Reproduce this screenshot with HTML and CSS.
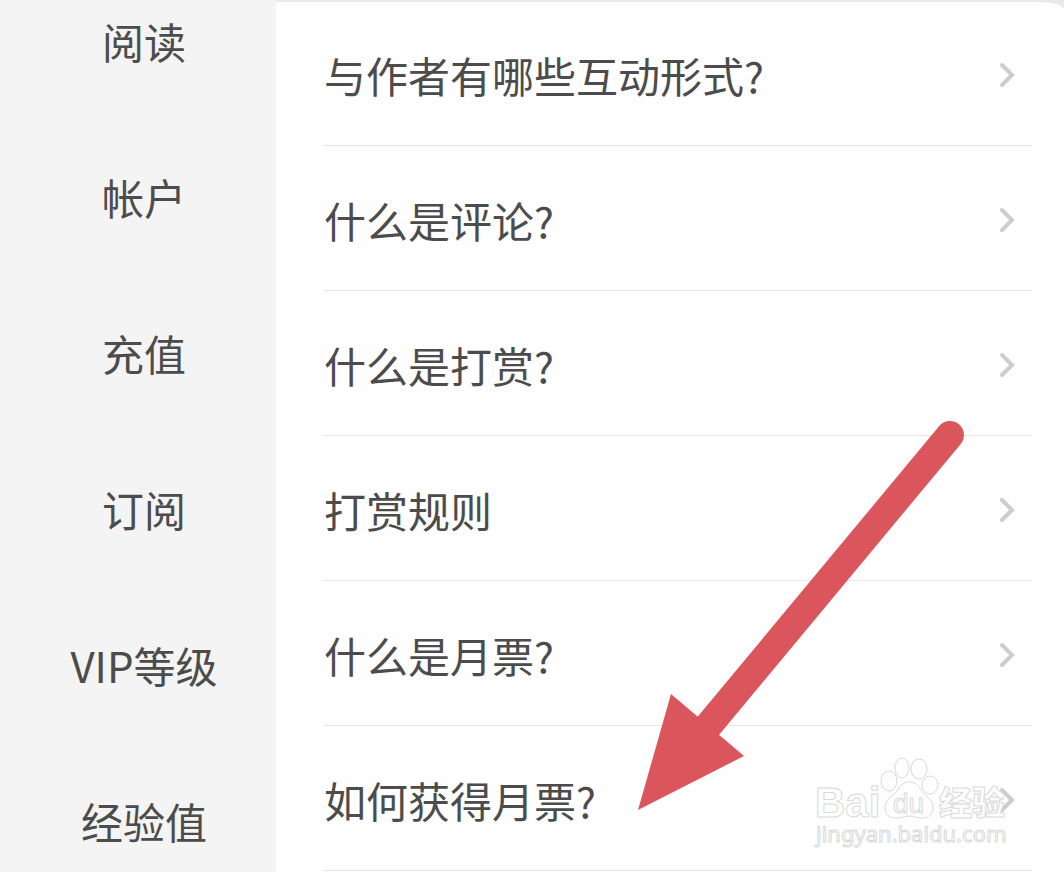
FILE: index.html
```html
<!DOCTYPE html>
<html lang="zh-CN">
<head>
<meta charset="utf-8">
<meta name="viewport" content="width=device-width, initial-scale=1">
<title>帮助中心</title>
<link rel="stylesheet" href="styles.css">
</head>
<body>
<div class="page">
  <nav class="sidebar">
    <a class="category" href="#read">阅读</a>
    <a class="category" href="#account">帐户</a>
    <a class="category" href="#topup">充值</a>
    <a class="category" href="#subscribe">订阅</a>
    <a class="category" href="#vip">VIP等级</a>
    <a class="category" href="#exp">经验值</a>
  </nav>
  <main class="panel">
    <a class="question" href="#q1"><span>与作者有哪些互动形式?</span><svg class="chevron" viewBox="0 0 20 28"><path d="M4 4 14 14 4 24"/></svg></a>
    <a class="question" href="#q2"><span>什么是评论?</span><svg class="chevron" viewBox="0 0 20 28"><path d="M4 4 14 14 4 24"/></svg></a>
    <a class="question" href="#q3"><span>什么是打赏?</span><svg class="chevron" viewBox="0 0 20 28"><path d="M4 4 14 14 4 24"/></svg></a>
    <a class="question" href="#q4"><span>打赏规则</span><svg class="chevron" viewBox="0 0 20 28"><path d="M4 4 14 14 4 24"/></svg></a>
    <a class="question" href="#q5"><span>什么是月票?</span><svg class="chevron" viewBox="0 0 20 28"><path d="M4 4 14 14 4 24"/></svg></a>
    <a class="question" href="#q6"><span>如何获得月票?</span><svg class="chevron" viewBox="0 0 20 28"><path d="M4 4 14 14 4 24"/></svg></a>
  </main>
  <svg class="arrow" viewBox="0 0 330 392" aria-hidden="true">
    <path class="arrow-shaft" d="M312 15 71 305"/>
    <path class="arrow-head" d="M0 390 33 274 106 336Z"/>
  </svg>
  <svg class="watermark" viewBox="0 0 210 100" aria-hidden="true">
    <text class="mark-brand" x="3" y="67">Bai</text>
    <ellipse cx="77" cy="31" rx="8" ry="10"/>
    <ellipse cx="90" cy="18" rx="7" ry="10"/>
    <ellipse cx="107" cy="19" rx="8" ry="10"/>
    <ellipse cx="118" cy="35" rx="8" ry="9"/>
    <path d="M97 32C91 32 88 36 85 41 81 46 73 49 73 58 73 65 78 68 85 68 91 68 93 66 97 66 102 66 104 68 110 68 117 68 121 64 121 57 121 49 113 46 109 40 106 35 103 32 97 32Z"/>
    <text class="mark-du" x="81" y="63">du</text>
    <text class="mark-cn" x="127" y="65">经验</text>
    <text class="mark-url" x="4" y="92">jingyan.baidu.com</text>
  </svg>
</div>
</body>
</html>
```
FILE: styles.css
```css
* {
  box-sizing: border-box;
}

body {
  margin: 0;
  background: #f4f4f4;
  color: #4c4c4c;
  font-family: "Noto Sans CJK SC", sans-serif;
  font-size: 42px;
  line-height: 60px;
}

a {
  color: inherit;
  text-decoration: none;
}

.page {
  position: relative;
  display: grid;
  grid-template-columns: 276px 1fr;
  min-height: 100vh;
  overflow: hidden;
  background: #e8e8e8;
}

.sidebar {
  display: flex;
  flex-direction: column;
  gap: 96px;
  padding: 11px 0 0 12px;
  background: #f4f4f4;
  text-align: center;
}

.panel {
  margin-top: 2px;
  padding: 0 32px 0 48px;
  background: #fefefe;
  border-top-right-radius: 24px 8px;
}

.question {
  display: flex;
  align-items: center;
  justify-content: space-between;
  height: 145px;
  padding-top: 3px;
  border-bottom: 1px solid #e6e6e6;
}

.question:first-child {
  height: 144px;
}

.chevron {
  width: 20px;
  height: 28px;
  margin-right: 14px;
  fill: none;
  stroke: #cdcdcd;
  stroke-width: 4;
  stroke-linecap: round;
}

.arrow {
  position: absolute;
  top: 420px;
  left: 638px;
  width: 330px;
  height: 392px;
  pointer-events: none;
}

.arrow-shaft {
  fill: none;
  stroke: #db565c;
  stroke-width: 28;
  stroke-linecap: round;
}

.arrow-head {
  fill: #db565c;
}

.watermark {
  position: absolute;
  top: 750px;
  left: 812px;
  width: 210px;
  height: 100px;
  fill: #fefefe;
  fill-opacity: 0.8;
  stroke: #d9d9d9;
  stroke-width: 1;
  pointer-events: none;
}

.mark-brand {
  font: bold 42px "Liberation Sans", sans-serif;
}

.mark-du {
  font: 28px "Liberation Sans", sans-serif;
}

.mark-cn {
  font: 900 33px "Noto Sans CJK SC", sans-serif;
}

.mark-url {
  font: 22px "Noto Sans", sans-serif;
}
```
